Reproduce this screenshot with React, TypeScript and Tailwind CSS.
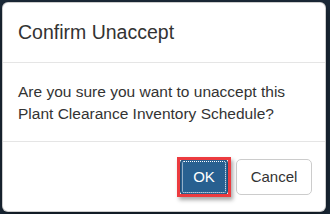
export default function App() {
  return (
    <div className="h-[214px] w-[330px] overflow-hidden bg-[#1c2b3a] pl-[2px] pt-[2px] font-['Liberation_Sans',Arial,sans-serif] text-[#333]">
      <div className="w-[324px] rounded-[6px] border border-[rgba(0,0,0,0.2)] bg-white shadow-[0_5px_15px_rgba(0,0,0,0.5)]">
        <div className="border-b border-[#e5e5e5] px-[15px] pb-[15px] pt-[15px]">
          <h4 className="text-[19.5px] leading-[29px]">Confirm Unaccept</h4>
        </div>
        <div className="px-[15px] pb-[16px] pt-[18px] text-[15.5px] leading-[22px]">
          <p>
            Are you sure you want to unaccept this
            <br />
            Plant Clearance Inventory Schedule?
          </p>
        </div>
        <div className="flex justify-end border-t border-[#e5e5e5] pb-[16px] pr-[13px] pt-[17px]">
          <div className="relative">
            <button className="h-[36px] w-[48px] rounded-[4px] border border-[#204d74] bg-[#286090] text-[15px] leading-[22px] text-white outline outline-1 -outline-offset-[3px] outline-dotted outline-white">
              OK
            </button>
            <div className="pointer-events-none absolute -bottom-[2px] -left-[3px] -right-[3px] -top-[2px] border-[3px] border-[#ec3b3f] shadow-[2px_3px_4px_rgba(0,0,0,0.35)]" />
          </div>
          <button className="ml-[8px] h-[36px] w-[76px] rounded-[5px] border border-[#ccc] bg-white text-[15px] leading-[22px] text-[#333]">
            Cancel
          </button>
        </div>
      </div>
    </div>
  );
}
